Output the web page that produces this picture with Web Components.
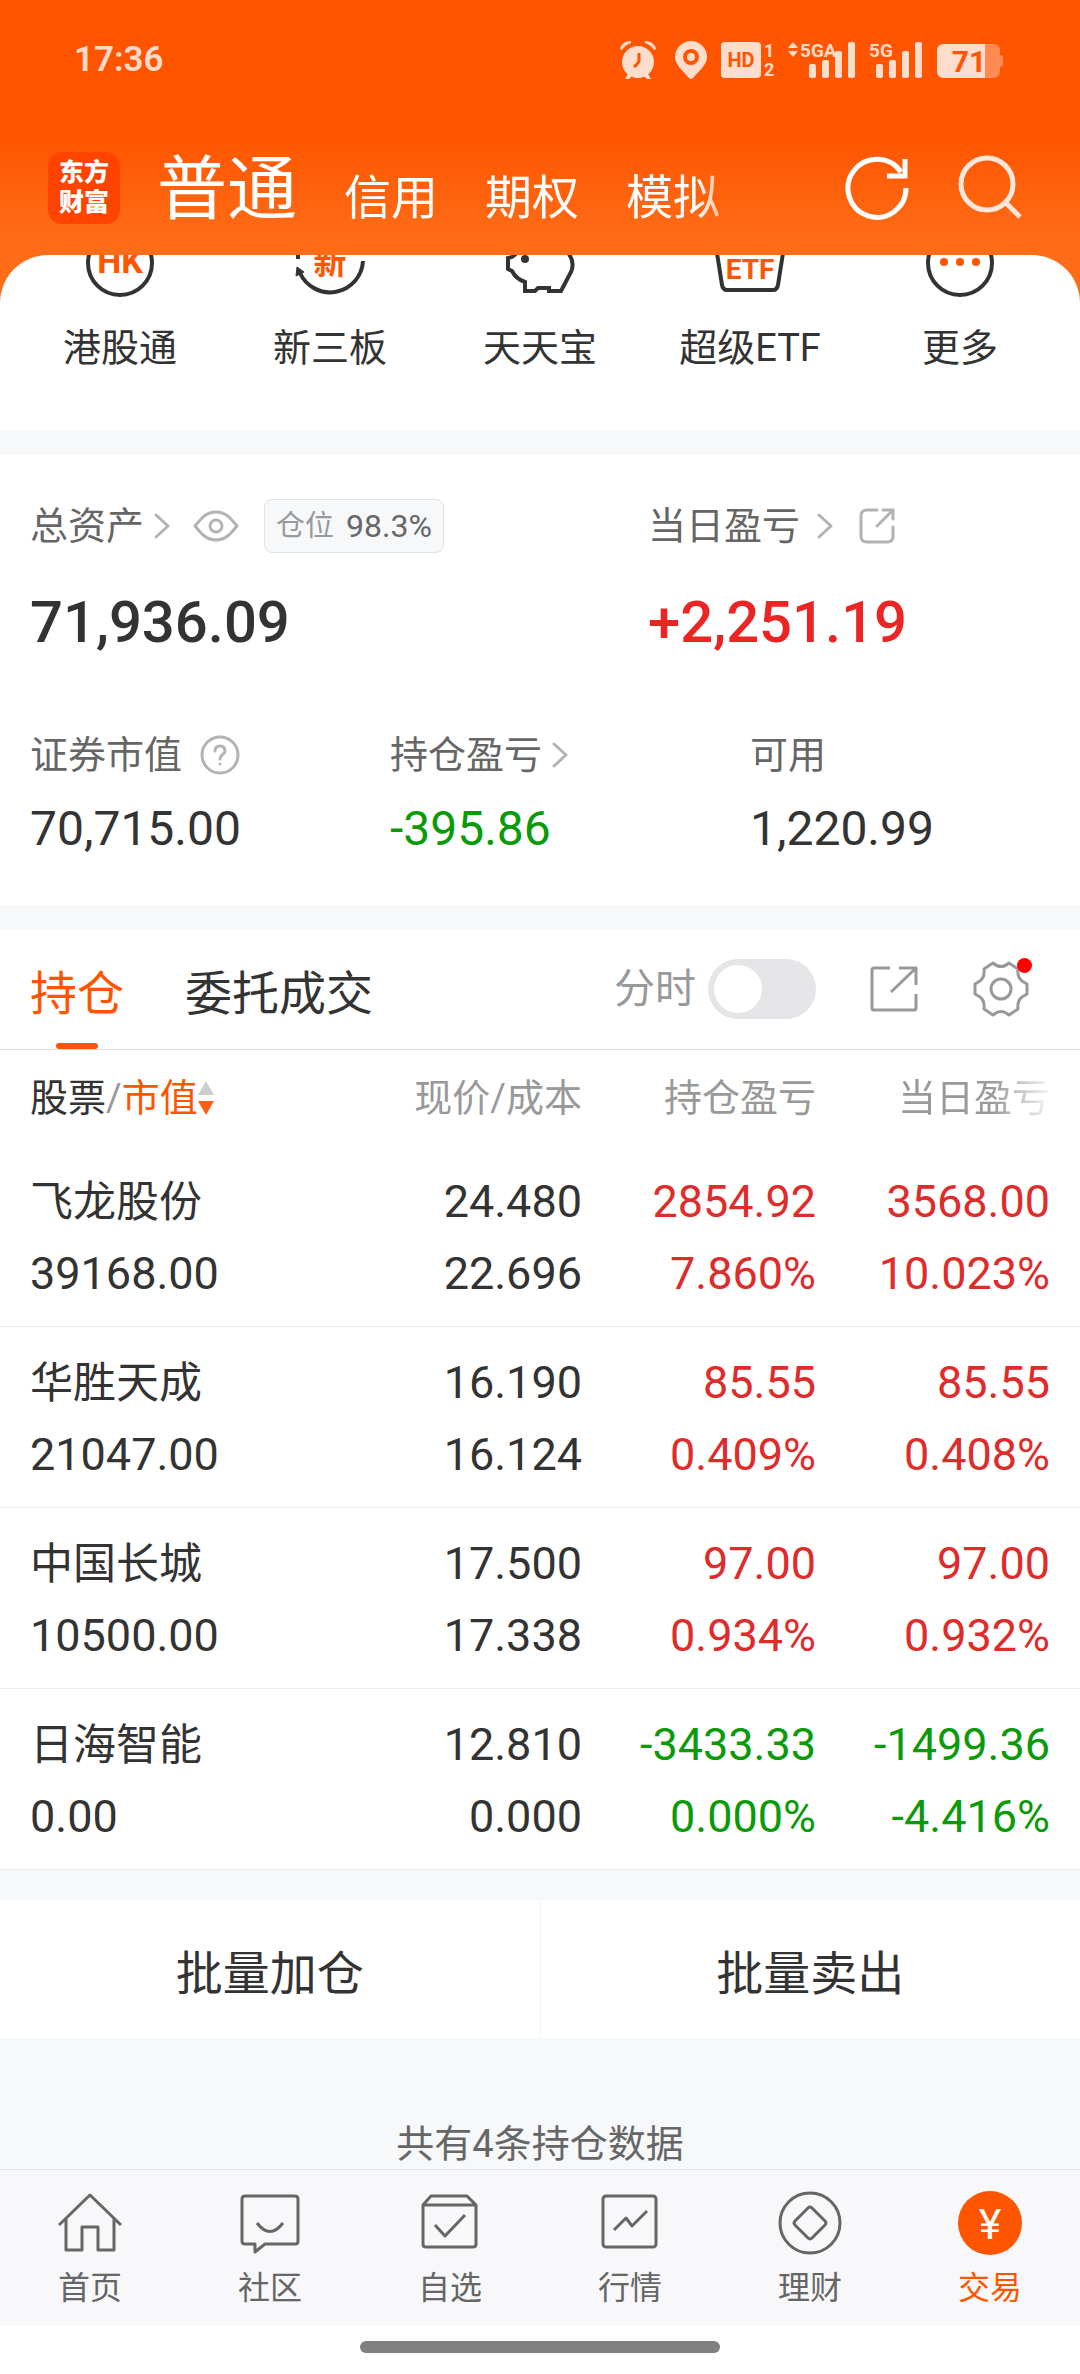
<!DOCTYPE html>
<html lang="zh-CN">
<head>
<meta charset="utf-8">
<meta name="viewport" content="width=device-width, initial-scale=1">
<title>交易</title>
<style>
    html, body {
        margin: 0;
        min-height: 100%;
    }
    body {
        font-family: Roboto, "Noto Sans CJK SC", sans-serif;
        font-size: 38px;
        color: #333333;
        background: #f7f8fa;
        --orange: #ff5500;
        --red: #eb2424;
        --green: #0a9a0a;
        --grey: #666666;
        --light: #999999;
        --line: #e2e2e4;
        --gap: #f7f8fa;
    }
</style>
</head>
<body>

<template id="x-status-bar">
    <style>
        :host {
            display: flex;
            align-items: center;
            justify-content: space-between;
            box-sizing: border-box;
            height: 120px;
            padding: 0 76px 0 74px;
            color: rgba(255, 255, 255, .8);
        }
        time {
            font-size: 35px;
            line-height: 40px;
            font-weight: 600;
        }
        .icons {
            display: flex;
            align-items: center;
            gap: 13px;
        }
        svg {
            display: block;
            fill: currentColor;
        }
        text {
            font-weight: 700;
        }
        .hole {
            fill: #ff5500;
        }
    </style>
    <time>17:36</time>
    <div class="icons">
        <svg width="42" height="40" viewBox="0 0 42 40">
            <circle cx="19" cy="22" r="16"/>
            <path d="M1 9Q3 1 12 1L12 3Q6 5 3 10ZM37 9Q35 1 26 1L26 3Q32 5 35 10Z"/>
            <path d="M9 34L6 39H10L13 36ZM29 34L32 39H28L25 36Z"/>
            <path d="M20 13V21Q19 24 15 27" fill="none" stroke="#ff5500" stroke-width="3"/>
        </svg>
        <svg width="34" height="40" viewBox="0 0 34 40">
            <path fill-rule="evenodd" d="M17 1a16 16 0 0 1 16 16c0 8-9 15-14 21q-2 2-4 0C10 32 1 25 1 17A16 16 0 0 1 17 1zM17 9a8 8 0 1 0 0 16a8 8 0 1 0 0-16z"/>
            <circle cx="17" cy="17" r="4"/>
        </svg>
        <svg width="54" height="40" viewBox="0 0 54 40">
            <rect y="2" width="40" height="36" rx="4"/>
            <text class="hole" x="20" y="27" font-size="20" text-anchor="middle">HD</text>
            <text x="43" y="17" font-size="18">1</text>
            <text x="43" y="36" font-size="18">2</text>
        </svg>
        <svg width="68" height="40" viewBox="0 0 68 40">
            <path d="M0 8L5 2L10 8ZM0 11H10L5 17Z"/>
            <text x="12" y="17" font-size="19">5GA</text>
            <rect x="21" y="24" width="7" height="14" rx="2"/>
            <rect x="34" y="20" width="7" height="18" rx="2"/>
            <rect x="47" y="11" width="7" height="27" rx="2"/>
            <rect x="60" y="2" width="7" height="36" rx="2"/>
        </svg>
        <svg width="54" height="40" viewBox="0 0 54 40">
            <text x="0" y="17" font-size="19">5G</text>
            <rect x="7" y="24" width="7" height="14" rx="2"/>
            <rect x="20" y="20" width="7" height="18" rx="2"/>
            <rect x="33" y="11" width="7" height="27" rx="2"/>
            <rect x="46" y="2" width="7" height="36" rx="2"/>
        </svg>
        <svg width="68" height="40" viewBox="0 0 68 40">
            <path opacity=".4" d="M49 4H57Q64 4 64 11V15Q67 15 67 18V24Q67 27 64 27V31Q64 38 57 38H49Z"/>
            <path d="M8 4H49V38H8Q1 38 1 31V11Q1 4 8 4Z"/>
            <text class="hole" x="33" y="32" font-size="30" text-anchor="middle">71</text>
        </svg>
    </div>
</template>

<template id="x-account-bar">
    <style>
        :host {
            display: flex;
            align-items: center;
            height: 135px;
            padding: 0 56px 0 48px;
            color: #ffffff;
        }
        .logo {
            display: grid;
            place-content: center;
            width: 72px;
            height: 72px;
            border-radius: 14px;
            background: #ff4400;
            font-size: 25px;
            line-height: 30px;
            font-weight: 900;
            text-align: center;
            flex: none;
        }
        nav {
            display: flex;
            align-items: baseline;
            gap: 47px;
            flex: none;
            padding: 12px 28px 0 37px;
            -webkit-mask-image: linear-gradient(to left, transparent, #000 50px);
            mask-image: linear-gradient(to left, transparent, #000 50px);
        }
        button {
            margin: 0;
            padding: 0;
            border: 0;
            background: none;
            font: inherit;
            font-size: 47px;
            line-height: 100px;
            color: inherit;
        }
        button.active {
            font-size: 70px;
        }
        .tools {
            display: flex;
            align-items: center;
            gap: 44px;
            margin-left: auto;
        }
        svg {
            display: block;
            fill: none;
            stroke: currentColor;
            stroke-width: 5;
        }
    </style>
    <div class="logo"><span>东方</span><span>财富</span></div>
    <nav>
        <button class="active">普通</button>
        <button>信用</button>
        <button>期权</button>
        <button>模拟</button>
    </nav>
    <div class="tools">
        <button aria-label="刷新">
            <svg width="68" height="68" viewBox="0 0 68 68"><path d="M62 34A29 29 0 1 1 57 18"/><path d="M61 5V22H43"/></svg>
        </button>
        <button aria-label="搜索">
            <svg width="68" height="68" viewBox="0 0 68 68" opacity=".85"><circle cx="31" cy="30" r="26"/><path d="M49 48L64 63"/></svg>
        </button>
    </div>
</template>

<template id="x-quick-item">
    <style>
        :host {
            display: block;
            flex: 1;
        }
        a {
            display: flex;
            flex-direction: column;
            align-items: center;
            color: inherit;
            text-decoration: none;
            line-height: 90px;
        }
        ::slotted(svg) {
            display: block;
            fill: none;
            stroke: #333333;
            stroke-width: 4;
        }
    </style>
    <a href="#"><slot name="icon"></slot><span><slot></slot></span></a>
</template>

<template id="x-asset-panel">
    <style>
        :host {
            display: block;
            padding: 35px 0 38px;
            background: #ffffff;
        }
        dl {
            display: grid;
            margin: 0;
        }
        .main {
            grid-template-columns: 3fr 2fr;
        }
        .sub {
            grid-template-columns: repeat(3, 1fr);
            margin-top: 37px;
        }
        .main > div:first-child, .sub > div {
            padding-left: 30px;
        }
        dt {
            display: flex;
            align-items: center;
            height: 72px;
            line-height: 72px;
            color: var(--grey);
        }
        dd {
            margin: 0;
            font-size: 48px;
            line-height: 76px;
        }
        .main dd {
            font-size: 58px;
            line-height: 120px;
            font-weight: 500;
        }
        .up {
            color: var(--red);
        }
        .down {
            color: var(--green);
        }
        svg {
            display: block;
            fill: none;
            stroke: #b3b3b3;
            stroke-width: 3;
            stroke-linecap: round;
            stroke-linejoin: round;
        }
        .arrow {
            margin-left: 8px;
        }
        .eye {
            margin-left: 20px;
        }
        .help {
            margin-left: 18px;
        }
        .wide .arrow {
            margin-left: 15px;
        }
        .wide .share {
            margin-left: 24px;
        }
        .badge {
            display: flex;
            align-items: center;
            gap: 12px;
            box-sizing: border-box;
            height: 54px;
            margin-left: 24px;
            padding: 0 11px;
            border: 1px solid var(--line);
            border-radius: 8px;
            background: var(--gap);
            font-size: 32px;
        }
        .badge span {
            font-size: 29px;
            color: var(--light);
        }
    </style>
    <dl class="main">
        <div>
            <dt>总资产
                <svg class="arrow" width="20" height="30" viewBox="0 0 20 30"><path d="M4 4L16 15L4 26"/></svg>
                <svg class="eye" width="48" height="34" viewBox="0 0 48 34"><path d="M3 17Q7 12 11 8Q17 3 24 3Q31 3 37 8Q41 12 45 17Q41 22 37 26Q31 31 24 31Q17 31 11 26Q7 22 3 17Z"/><circle cx="24" cy="17" r="6"/></svg>
                <div class="badge"><span>仓位</span>98.3%</div>
            </dt>
            <dd>71,936.09</dd>
        </div>
        <div class="wide">
            <dt>当日盈亏
                <svg class="arrow" width="20" height="30" viewBox="0 0 20 30"><path d="M4 4L16 15L4 26"/></svg>
                <svg class="share" width="36" height="36" viewBox="0 0 36 36"><path d="M18 2H8Q2 2 2 8V28Q2 34 8 34H28Q34 34 34 28V19M18 18L33 3M24 2H34V11"/></svg>
            </dt>
            <dd class="up">+2,251.19</dd>
        </div>
    </dl>
    <dl class="sub">
        <div>
            <dt>证券市值
                <svg class="help" width="40" height="40" viewBox="0 0 40 40"><circle cx="20" cy="20" r="18"/><path d="M15 16Q15 11 20 11Q25 11 25 16Q25 18 22 20Q20 22 20 24"/><path d="M20 29V29"/></svg>
            </dt>
            <dd>70,715.00</dd>
        </div>
        <div>
            <dt>持仓盈亏
                <svg class="arrow" width="20" height="30" viewBox="0 0 20 30"><path d="M4 4L16 15L4 26"/></svg>
            </dt>
            <dd class="down">-395.86</dd>
        </div>
        <div>
            <dt>可用</dt>
            <dd>1,220.99</dd>
        </div>
    </dl>
</template>

<template id="x-position-tabs">
    <style>
        :host {
            display: flex;
            align-items: center;
            height: 120px;
            padding: 0 51px 0 30px;
            border-bottom: 1px solid #dcdcdc;
            background: #ffffff;
        }
        button {
            margin: 0;
            padding: 0;
            border: 0;
            background: none;
            font: inherit;
            color: inherit;
        }
        .tab {
            position: relative;
            height: 120px;
            margin-right: 61px;
            font-size: 47px;
        }
        .tab.active {
            color: var(--orange);
        }
        .tab.active::after {
            content: "";
            position: absolute;
            left: calc(50% - 21px);
            bottom: 0;
            width: 42px;
            height: 6px;
            border-radius: 3px;
            background: var(--orange);
        }
        label {
            margin-left: auto;
            font-size: 41px;
            line-height: 60px;
            color: var(--light);
        }
        input {
            appearance: none;
            width: 108px;
            height: 60px;
            margin: 0 53px 0 12px;
            padding: 6px;
            box-sizing: border-box;
            border-radius: 30px;
            background: #e5e5e7;
        }
        input::before {
            content: "";
            display: block;
            width: 48px;
            height: 48px;
            border-radius: 50%;
            background: #ffffff;
        }
        input:checked {
            background: var(--orange);
        }
        input:checked::before {
            margin-left: auto;
        }
        svg {
            display: block;
            fill: none;
            stroke: var(--light);
            stroke-width: 3;
            stroke-linejoin: round;
        }
        .gear {
            position: relative;
            margin-left: 54px;
        }
        .gear::after {
            content: "";
            position: absolute;
            top: -3px;
            right: -3px;
            width: 15px;
            height: 15px;
            border-radius: 50%;
            background: #ff0000;
        }
    </style>
    <button class="tab active">持仓</button>
    <button class="tab">委托成交</button>
    <label for="minute">分时</label>
    <input type="checkbox" id="minute">
    <button aria-label="分享">
        <svg width="50" height="50" viewBox="0 0 50 50"><path d="M21 4H5Q3 4 3 6V44Q3 46 5 46H45Q47 46 47 44V30M22 28L46 5M30 4H47V21"/></svg>
    </button>
    <button class="gear" aria-label="设置">
        <svg width="56" height="56" viewBox="0 0 56 56"><path d="M2 23V33L7 36Q12 40 11 48L20 54Q28 47 36 54L45 48Q44 40 49 36L54 33V23L49 20Q44 16 45 8L36 2Q28 9 20 2L11 8Q12 16 7 20Z"/><circle cx="28" cy="28" r="10"/></svg>
    </button>
</template>

<template id="x-position-table">
    <style>
        :host {
            display: block;
            background: #ffffff;
        }
        table {
            width: 100%;
            border-collapse: collapse;
            table-layout: fixed;
        }
        th {
            height: 96px;
            padding: 0;
            font-weight: 400;
            line-height: 60px;
            text-align: right;
            white-space: nowrap;
            color: var(--light);
        }
        th:first-child, td:first-child {
            width: 318px;
            padding-left: 30px;
            text-align: left;
        }
        th:last-child, td:last-child {
            width: 234px;
            padding-right: 30px;
        }
        th button {
            display: flex;
            align-items: center;
            padding: 0;
            border: 0;
            background: none;
            font: inherit;
            color: var(--light);
        }
        th b {
            font-weight: 400;
            color: #333333;
        }
        th i {
            font-style: normal;
            color: var(--orange);
        }
        th svg {
            display: block;
        }
        .fade {
            display: block;
            -webkit-mask-image: linear-gradient(to right, #000 75%, rgba(0, 0, 0, .1));
            mask-image: linear-gradient(to right, #000 75%, rgba(0, 0, 0, .1));
        }
        td {
            padding: 20px 0 16px;
            border-bottom: 1px solid #ededee;
            font-size: 45px;
            line-height: 72px;
            text-align: right;
        }
        td span {
            display: block;
        }
        .name {
            font-size: 43px;
        }
        .up {
            color: #e02b2b;
        }
        .down {
            color: var(--green);
        }
    </style>
    <table>
        <thead>
            <tr>
                <th><button><b>股票</b>/<i>市值</i><svg width="16" height="36" viewBox="0 0 16 36"><path d="M8 1L16 15H0Z" fill="#cccccc"/><path d="M0 21H16L8 35Z" fill="#ff5f14"/></svg></button></th>
                <th>现价/成本</th>
                <th>持仓盈亏</th>
                <th><span class="fade">当日盈亏</span></th>
            </tr>
        </thead>
        <tbody></tbody>
    </table>
</template>

<template id="x-batch-actions">
    <style>
        :host {
            display: flex;
            margin-top: 30px;
            background: #ffffff;
        }
        button {
            flex: 1;
            height: 138px;
            padding: 0;
            border: 0;
            background: none;
            font: inherit;
            font-size: 47px;
            color: inherit;
        }
        button + button {
            border-left: 1px solid #f4f4f5;
        }
    </style>
    <button>批量加仓</button>
    <button>批量卖出</button>
</template>

<template id="x-nav-item">
    <style>
        :host {
            display: block;
            flex: 1;
            color: var(--grey);
        }
        :host([active]) {
            color: var(--orange);
        }
        a {
            display: flex;
            flex-direction: column;
            align-items: center;
            padding-top: 21px;
            color: inherit;
            text-decoration: none;
            font-size: 32px;
            line-height: 66px;
        }
        ::slotted(svg) {
            display: block;
            fill: none;
            stroke: currentColor;
            stroke-width: 3;
            stroke-linejoin: round;
        }
    </style>
    <a href="#"><slot name="icon"></slot><span><slot></slot></span></a>
</template>

<template id="x-trade-page">
    <style>
        :host {
            display: flex;
            flex-direction: column;
            min-height: 100vh;
        }
        header {
            background: linear-gradient(#ff5500 135px, #ff6c17 240px);
        }
        .corner {
            background: #ff6c17;
        }
        .quick {
            display: flex;
            padding: 0 15px 38px;
            border-radius: 48px 48px 0 0;
            background: #ffffff;
        }
        x-asset-panel, x-position-tabs {
            border-top: 24px solid var(--gap);
        }
        .count {
            display: flex;
            flex: 1;
            align-items: flex-end;
            justify-content: center;
            margin: 0;
            padding-top: 60px;
            line-height: 50px;
            color: var(--grey);
        }
        nav {
            display: flex;
            height: 156px;
            border-top: 1px solid var(--line);
            background: #f8f8fa;
        }
        footer {
            display: flex;
            justify-content: center;
            padding: 15px 0 21px;
            background: #ffffff;
        }
        footer div {
            width: calc(100% / 3);
            height: 12px;
            border-radius: 6px;
            background: #808080;
        }
        .quick text, .quick .dot {
            fill: #ff5500;
            stroke: none;
            font-weight: 700;
            text-anchor: middle;
        }
    </style>
    <header>
        <x-status-bar></x-status-bar>
        <x-account-bar></x-account-bar>
    </header>
    <div class="corner">
        <div class="quick">
            <x-quick-item>
                <svg slot="icon" width="80" height="48" viewBox="0 32 80 48"><circle cx="40" cy="40" r="32"/><text x="40" y="50" font-size="34">HK</text></svg>
                港股通
            </x-quick-item>
            <x-quick-item>
                <svg slot="icon" width="80" height="48" viewBox="0 32 80 48"><path d="M73 38A33 33 0 0 1 10 50M8 30V36"/><path d="M7 44L6 53L14 49Z" fill="#333333" stroke-width="1"/><text x="40" y="51" font-size="33">新</text></svg>
                新三板
            </x-quick-item>
            <x-quick-item>
                <svg slot="icon" width="80" height="48" viewBox="0 32 80 48"><path d="M16 31L12 34L8 35V46L12 48Q16 56 25 59V68H35L38 65H49V68H61L71 49Q75 40 69 31"/><circle cx="25" cy="36" r="4" fill="#333333" stroke="none"/></svg>
                天天宝
            </x-quick-item>
            <x-quick-item>
                <svg slot="icon" width="80" height="48" viewBox="0 32 80 48"><path d="M7 30L12 62Q13 67 17 67H63Q67 67 68 62L73 30"/><text x="40" y="56" font-size="28">ETF</text></svg>
                超级ETF
            </x-quick-item>
            <x-quick-item>
                <svg slot="icon" width="80" height="48" viewBox="0 32 80 48"><circle cx="40" cy="40" r="32"/><circle class="dot" cx="24" cy="39" r="4"/><circle class="dot" cx="40" cy="39" r="4"/><circle class="dot" cx="56" cy="39" r="4"/></svg>
                更多
            </x-quick-item>
        </div>
    </div>
    <x-asset-panel></x-asset-panel>
    <x-position-tabs></x-position-tabs>
    <x-position-table></x-position-table>
    <x-batch-actions></x-batch-actions>
    <p class="count">共有4条持仓数据</p>
    <nav>
        <x-nav-item>
            <svg slot="icon" width="64" height="64" viewBox="0 0 64 64"><path d="M1 34L32 4L63 34M8 27V59H24V36H40V59H56V27"/></svg>
            首页
        </x-nav-item>
        <x-nav-item>
            <svg slot="icon" width="64" height="64" viewBox="0 0 64 64"><path d="M7 5H57Q60 5 60 8V50Q60 53 57 53H27L17 61V53H7Q4 53 4 50V8Q4 5 7 5ZM19 32Q32 49 45 32"/></svg>
            社区
        </x-nav-item>
        <x-nav-item>
            <svg slot="icon" width="64" height="64" viewBox="0 0 64 64"><path d="M5 14L13 5H49L58 14V53Q58 56 55 56H8Q5 56 5 53ZM5 14H58M17 34L27 45L47 24"/></svg>
            自选
        </x-nav-item>
        <x-nav-item>
            <svg slot="icon" width="64" height="64" viewBox="0 0 64 64"><rect x="5" y="5" width="53" height="51" rx="3"/><path d="M16 39L28 27L34 35L49 20"/></svg>
            行情
        </x-nav-item>
        <x-nav-item>
            <svg slot="icon" width="64" height="64" viewBox="0 0 64 64"><circle cx="32" cy="32" r="30"/><path d="M30 17Q32 15 34 17L47 30Q49 32 47 34L34 47Q32 49 30 47L17 34Q15 32 17 30Z"/></svg>
            理财
        </x-nav-item>
        <x-nav-item active>
            <svg slot="icon" width="64" height="64" viewBox="0 0 64 64"><circle cx="32" cy="32" r="32" fill="#ff5500" stroke="none"/><text x="32" y="48" font-size="43" text-anchor="middle" fill="#ffffff" stroke="none">¥</text></svg>
            交易
        </x-nav-item>
    </nav>
    <footer><div></div></footer>
</template>

<x-trade-page></x-trade-page>

<script>
    class BaseElement extends HTMLElement {
        constructor () {
            super();
            //clone the template to the shadowDom
            const template = document.querySelector('#' + this.localName);
            this.attachShadow({mode: 'open'}).appendChild(template.content.cloneNode(true));
        }
    }

    ['x-status-bar', 'x-account-bar', 'x-quick-item', 'x-asset-panel', 'x-batch-actions', 'x-nav-item'].forEach(name => {
        window.customElements.define(name, class extends BaseElement {});
    });

    window.customElements.define('x-position-tabs', class extends BaseElement {
        constructor () {
            super();
            const tabs = this.shadowRoot.querySelectorAll('.tab');
            tabs.forEach(tab => tab.addEventListener('click', () => {
                tabs.forEach(t => t.classList.toggle('active', t === tab));
            }));
        }
    });

    // name, market value, price, cost, profit, profit %, day profit, day profit %
    const positions = [
        ['飞龙股份', '39168.00', '24.480', '22.696', '2854.92', '7.860%', '3568.00', '10.023%'],
        ['华胜天成', '21047.00', '16.190', '16.124', '85.55', '0.409%', '85.55', '0.408%'],
        ['中国长城', '10500.00', '17.500', '17.338', '97.00', '0.934%', '97.00', '0.932%'],
        ['日海智能', '0.00', '12.810', '0.000', '-3433.33', '0.000%', '-1499.36', '-4.416%']
    ];

    window.customElements.define('x-position-table', class extends BaseElement {
        connectedCallback () {
            const trend = value => value.startsWith('-') ? 'down' : 'up';
            this.shadowRoot.querySelector('tbody').innerHTML = positions.map(p => `
                <tr>
                    <td><span class="name">${p[0]}</span><span>${p[1]}</span></td>
                    <td><span>${p[2]}</span><span>${p[3]}</span></td>
                    <td class="${trend(p[4])}"><span>${p[4]}</span><span>${p[5]}</span></td>
                    <td class="${trend(p[6])}"><span>${p[6]}</span><span>${p[7]}</span></td>
                </tr>`).join('');
        }
    });

    window.customElements.define('x-trade-page', class extends BaseElement {});
</script>
</body>
</html>
